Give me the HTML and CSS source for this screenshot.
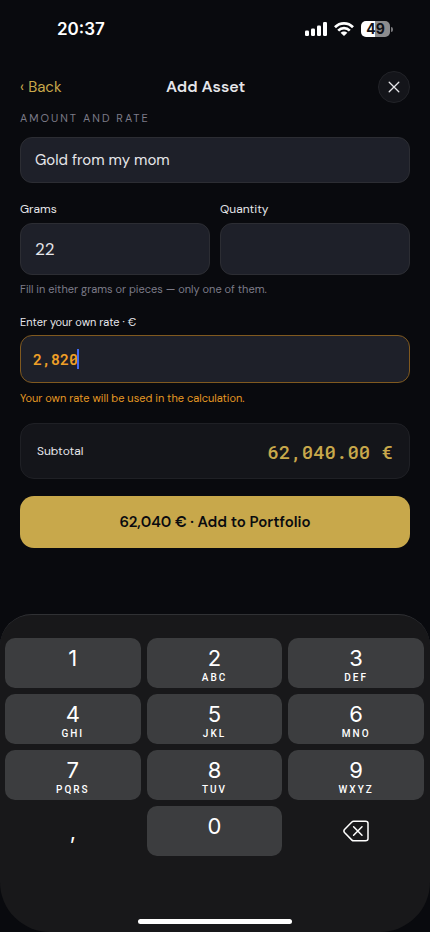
FILE: index.html
```html
<!DOCTYPE html>
<html lang="en">
<head>
<meta charset="utf-8">
<meta name="viewport" content="width=device-width, initial-scale=1">
<title>Add Asset</title>
<link rel="stylesheet" href="styles.css">
</head>
<body>
<div class="screen">
  <div class="status">
    <span class="time">20:37</span>
    <div class="indicators">
      <svg width="22" height="14" viewBox="0 0 22 14" fill="#fff" aria-hidden="true">
        <rect x="0" y="8.5" width="4" height="5.5" rx="1.2"/><rect x="6" y="6.5" width="4" height="7.5" rx="1.2"/><rect x="12" y="3.5" width="4" height="10.5" rx="1.2"/><rect x="18" y="0" width="4" height="14" rx="1.2"/>
      </svg>
      <svg width="20" height="14" viewBox="0 0 20 14" fill="none" stroke="#fff" stroke-width="2.7" aria-hidden="true">
        <path d="M1 5.2C6 .1 14 .1 19 5.2M4.2 8.6c3.3-3.3 8.3-3.3 11.6 0"/><path d="M6.6 10.8c1.9-1.9 4.9-1.9 6.8 0L10 14z" fill="#fff" stroke="none"/>
      </svg>
      <div class="battery"><span class="battery-level">49</span><span class="battery-tip"></span></div>
    </div>
  </div>

  <header class="header">
    <button class="back" type="button">‹ Back</button>
    <h1 class="title">Add Asset</h1>
    <button class="close" type="button" aria-label="Close">
      <svg width="12" height="12" viewBox="0 0 12 12" fill="none" stroke="#e6e6ea" stroke-width="1.3" stroke-linecap="round"><path d="M1.2 1.2l9.6 9.6M10.8 1.2L1.2 10.8"/></svg>
    </button>
  </header>

  <form class="form">
    <h2 class="section">AMOUNT AND RATE</h2>
    <input class="input name" type="text" aria-label="Asset name" value="Gold from my mom">
    <div class="pair">
      <div class="field">
        <label class="label" for="grams">Grams</label>
        <input class="input amount" id="grams" type="text" inputmode="decimal" value="22">
      </div>
      <div class="field">
        <label class="label" for="quantity">Quantity</label>
        <input class="input amount" id="quantity" type="text" inputmode="numeric">
      </div>
    </div>
    <p class="hint">Fill in either grams or pieces — only one of them.</p>
    <label class="label small" for="rate">Enter your own rate · €</label>
    <div class="rate-box">
      <input class="input rate" id="rate" type="text" inputmode="decimal" value="2,820">
      <span class="caret"></span>
    </div>
    <p class="hint warn">Your own rate will be used in the calculation.</p>
    <div class="subtotal">
      <span>Subtotal</span>
      <output class="total">62,040.00 €</output>
    </div>
    <button class="submit" type="button">62,040 € · Add to Portfolio</button>
  </form>

  <div class="keyboard">
    <div class="keys">
      <button class="key" type="button">1</button>
      <button class="key" type="button">2<small>ABC</small></button>
      <button class="key" type="button">3<small>DEF</small></button>
      <button class="key" type="button">4<small>GHI</small></button>
      <button class="key" type="button">5<small>JKL</small></button>
      <button class="key" type="button">6<small>MNO</small></button>
      <button class="key" type="button">7<small>PQRS</small></button>
      <button class="key" type="button">8<small>TUV</small></button>
      <button class="key" type="button">9<small>WXYZ</small></button>
      <button class="key plain" type="button">,</button>
      <button class="key" type="button">0</button>
      <button class="key plain" type="button" aria-label="Delete">
        <svg width="26" height="22" viewBox="0 0 26 22" fill="none" stroke="#fff" stroke-width="1.5" stroke-linecap="round" stroke-linejoin="round"><path d="M10.6 1.2H22.5Q25 1.2 25 3.2V18.8Q25 20.8 22.5 20.8H10.6Q9.6 20.8 8.9 20.1L1.5 12.5Q.3 11 1.5 9.5L8.9 1.9Q9.6 1.2 10.6 1.2z"/><path d="M10.6 6.8l8.4 8.4M19 6.8l-8.4 8.4"/></svg>
      </button>
    </div>
    <div class="home"></div>
  </div>
</div>
</body>
</html>
```
FILE: styles.css
```css
* { box-sizing: border-box; }
body {
  margin: 0;
  background: #090a0e;
  color: #e6e6ea;
  font-family: "DM Sans", Inter, sans-serif;
}
button, input { font: inherit; color: inherit; margin: 0; }
button { border: 0; padding: 0; background: none; }
h1, h2, p { margin: 0; }

.screen { min-height: 100vh; display: flex; flex-direction: column; }

.status {
  display: flex;
  justify-content: space-between;
  align-items: center;
  height: 58px;
  padding: 0 37px 0 57px;
  color: #fff;
  font-family: Inter, sans-serif;
}
.time { font-size: 17px; font-weight: 600; }
.indicators { display: flex; align-items: center; gap: 7px; }
.battery { display: flex; align-items: center; gap: 1px; }
.battery-level {
  width: 29px;
  height: 16px;
  border-radius: 5px;
  background: linear-gradient(90deg, #fff 49%, #8c8c8e 49%);
  color: #111216;
  font-size: 14px;
  line-height: 16px;
  font-weight: 700;
  text-align: center;
}
.battery-tip { width: 2px; height: 5px; border-radius: 0 2px 2px 0; background: #77777a; }

.header { display: flex; align-items: center; padding: 13px 20px 0; }
.back { color: #c8a84b; font-size: 15px; }
.title { flex: 1; padding-right: 28px; text-align: center; font-size: 16px; line-height: 20px; font-weight: 600; }
.close {
  display: flex;
  align-items: center;
  justify-content: center;
  width: 32px;
  height: 32px;
  border: 1px solid #222328;
  border-radius: 50%;
  background: #14151a;
}

.form { display: flex; flex-direction: column; padding: 8px 20px 0; }
.section { font-size: 11px; line-height: 14px; font-weight: 400; letter-spacing: 2px; color: #7c7b88; }
.input {
  display: block;
  width: 100%;
  min-width: 0;
  border: 1px solid #2c2d33;
  border-radius: 12px;
  background: #1e2029;
  padding: 0 14px;
  outline: 0;
}
.name { height: 46px; margin-top: 12px; font-size: 15px; }
.pair { display: grid; grid-template-columns: 1fr 1fr; gap: 10px; margin-top: 18px; }
.label { display: block; font-size: 12px; line-height: 16px; }
.amount { height: 52px; margin-top: 6px; font-size: 17px; }
.hint { margin-top: 6px; font-size: 11px; line-height: 16px; color: #7c7b88; }
.small { margin-top: 17px; font-size: 11px; }
.rate-box { position: relative; margin-top: 5px; }
.rate {
  height: 48px;
  padding: 0 12px;
  border-color: #80591f;
  color: #ee9f27;
  font-family: "Roboto Mono", "DejaVu Sans Mono", monospace;
  font-size: 15px;
  font-weight: 600;
}
.caret { position: absolute; left: 57px; top: 14px; width: 2px; height: 20px; background: #3f69f0; }
.warn { margin-top: 7px; color: #e49823; }
.subtotal {
  display: flex;
  align-items: center;
  justify-content: space-between;
  height: 56px;
  margin-top: 17px;
  padding: 0 16px;
  border: 1px solid #1f2025;
  border-radius: 14px;
  background: #14151a;
  font-size: 12px;
}
.total { color: #c8a84b; font-family: "Roboto Mono", "DejaVu Sans Mono", monospace; font-size: 19px; font-weight: 500; }
.submit {
  height: 52px;
  margin-top: 17px;
  border-radius: 14px;
  background: #c8a84b;
  color: #0a0b0f;
  font-size: 15px;
  font-weight: 600;
}

.keyboard {
  display: flex;
  flex: 1;
  flex-direction: column;
  justify-content: space-between;
  margin-top: 66px;
  padding: 23px 6px 8px 5px;
  border-top: 1px solid #303134;
  border-radius: 32px 32px 50px 50px;
  background: #18181a;
  font-family: Inter, sans-serif;
}
.keys { display: grid; grid-template-columns: repeat(3, 1fr); gap: 6px; }
.key {
  display: flex;
  flex-direction: column;
  align-items: center;
  height: 50px;
  padding-top: 7px;
  border-radius: 10px;
  background: #3c3d3f;
  color: #fff;
  font-size: 22px;
  line-height: 26px;
}
.key small { font-family: Roboto, sans-serif; font-size: 10px; line-height: 14px; font-weight: 500; letter-spacing: 2px; }
.plain { justify-content: center; padding: 0; background: none; }
.home { align-self: center; width: 154px; height: 5px; border-radius: 3px; background: #fff; }
```
